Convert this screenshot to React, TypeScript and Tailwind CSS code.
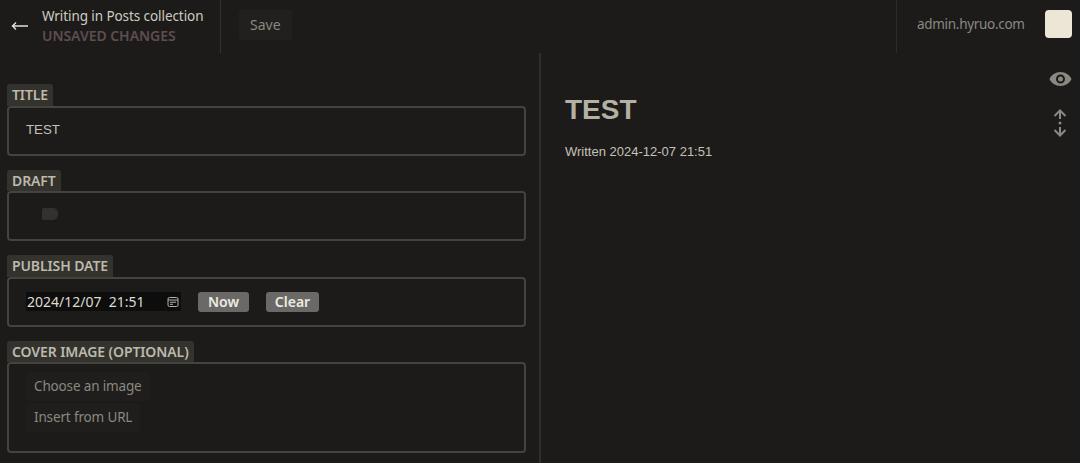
import React from "react";

const sans = "font-['Noto_Sans','Open_Sans',sans-serif]";

function Field({ label, h, children }: { label: string; h: string; children?: React.ReactNode }) {
  return (
    <div className="flex flex-col items-start">
      <div className="h-[21.5px] pl-[5px] pr-[5px] bg-[#34322d] rounded-t-[3px] text-[14px] leading-[22px] font-semibold text-[#bdb9ad] tracking-[-0.1px]">
        {label}
      </div>
      <div className={`w-[519px] ${h} border-2 border-[#44433f] rounded-[4px] flex flex-col`}>{children}</div>
    </div>
  );
}

export default function App() {
  return (
    <div className={`w-[1080px] h-[463px] overflow-hidden bg-[#1c1b1a] flex flex-col ${sans}`}>
      <header className="h-[53px] flex items-stretch shrink-0">
        <div className="w-[221px] border-r border-[#33322f] flex items-center">
          <svg width="18" height="10" viewBox="0 0 18 10" className="ml-[11px] mr-[13px] -mt-[1px] text-[#e4e0d4]" fill="none" stroke="currentColor" strokeWidth="1.4">
            <path d="M17 5H1.500M5 1.500 1.500 5 5 8.500" />
          </svg>
          <div className="flex flex-col -mt-[3px]">
            <span className="text-[13.5px] tracking-[-0.08px] leading-[20px] text-[#cfcbc0] whitespace-nowrap">Writing in Posts collection</span>
            <span className="text-[14px] leading-[19px] font-semibold tracking-[-0.05px] text-[#5e4e4e] whitespace-nowrap">UNSAVED CHANGES</span>
          </div>
        </div>
        <div className="flex-1 flex items-center pl-[18px]">
          <div className="h-[30px] px-[11px] -mt-[3px] rounded-[3px] bg-[#21201e] text-[14px] leading-[30px] text-[#8a8880]">Save</div>
        </div>
        <div className="w-[184px] border-l border-[#2d2c2a] flex items-center">
          <span className="ml-[20px] -mt-[5px] text-[13.5px] tracking-[-0.3px] text-[#8a8880] whitespace-nowrap">admin.hyruo.com</span>
          <div className="ml-auto mr-[8px] -mt-[5px] w-[27px] h-[28px] rounded-[4px] bg-[#ebe6d6]" />
        </div>
      </header>
      <div className="flex-1 flex min-h-0">
        <div className="w-[541px] shrink-0 border-r-2 border-[#2f2e2b] pl-[7px] pt-[31px] flex flex-col gap-[14px]">
          <Field label="TITLE" h="h-[50px]">
            <span className="ml-[17px] mt-[12.500px] font-['Liberation_Sans',sans-serif] text-[13.3px] leading-[20px] text-[#c4c1b8]">TEST</span>
          </Field>
          <Field label="DRAFT" h="h-[50px]">
            <div className="ml-[33px] mt-[15px] w-[16px] h-[12px] rounded-r-[5px] rounded-l-[2px] bg-[#32312e]" />
          </Field>
          <Field label="PUBLISH DATE" h="h-[50px]">
            <div className="mt-[13px] ml-[17px] flex items-center">
              <div className="w-[155px] h-[19px] bg-[#0e0d0d] flex items-center pl-[1px] text-[14px] leading-[19px] text-[#dedbd0] whitespace-pre">
                <span className="font-['Noto_Sans',sans-serif]">2024/12/07  21:51</span>
                <svg width="12" height="12" viewBox="0 0 12 12" className="ml-auto mr-[2px] text-[#b4b1a7]" fill="none" stroke="currentColor" strokeWidth="1">
                  <rect x="1" y="1.500" width="10" height="9" rx="1.500" />
                  <path d="M1 4h10M3 6.200h6M3 8.300h3" />
                </svg>
              </div>
              <div className="ml-[17px] w-[51px] h-[20px] rounded-[3px] bg-[#6a6967] text-center text-[14px] leading-[20px] font-semibold text-[#eeebe1]">Now</div>
              <div className="ml-[17px] w-[53px] h-[20px] rounded-[3px] bg-[#6a6967] text-center text-[14px] leading-[20px] font-semibold text-[#eeebe1]">Clear</div>
            </div>
          </Field>
          <Field label="COVER IMAGE (OPTIONAL)" h="h-[91px]">
            <div className="ml-[17px] mt-[8px] flex flex-col items-start gap-[2px]">
              <div className="h-[29px] px-[8px] rounded-[3px] bg-[#1f1e1c] text-[13.5px] tracking-[-0.15px] leading-[29px] text-[#8a8880] whitespace-nowrap">Choose an image</div>
              <div className="h-[29px] px-[8px] rounded-[3px] bg-[#1f1e1c] text-[13.5px] tracking-[-0.15px] leading-[29px] text-[#8a8880] whitespace-nowrap">Insert from URL</div>
            </div>
          </Field>
        </div>
        <div className="flex-1 flex font-['Liberation_Sans',sans-serif]">
          <div className="flex-1 pl-[24px] pt-[39px]">
            <h1 className="text-[28px] leading-[36px] font-bold text-[#b4b0a3]">TEST</h1>
            <p className="mt-[14px] text-[13px] leading-[20px] text-[#c4c1b6]">Written 2024-12-07 21:51</p>
          </div>
          <div className="w-[40px] flex flex-col items-center pt-[14px] text-[#8a8880]">
            <svg width="25" height="24" viewBox="0 0 24 24" fill="currentColor">
              <path d="M12 5C7 5 2.700 8.100 1 12c1.700 3.900 6 7 11 7s9.300-3.100 11-7c-1.700-3.900-6-7-11-7Zm0 11.500a4.500 4.500 0 1 1 0-9 4.500 4.500 0 0 1 0 9Zm0-7a2.500 2.500 0 1 0 0 5 2.500 2.500 0 0 0 0-5Z" />
            </svg>
            <svg width="16" height="28" viewBox="0 0 16 28" className="mt-[18px] mr-[1px]" fill="none" stroke="currentColor" strokeWidth="2">
              <path d="M8 10V2M2.500 7 8 1.500 13.500 7M8 18v8M2.500 21 8 26.500 13.500 21" />
              <circle cx="8" cy="14" r="1.500" fill="currentColor" stroke="none" />
            </svg>
          </div>
        </div>
      </div>
    </div>
  );
}
